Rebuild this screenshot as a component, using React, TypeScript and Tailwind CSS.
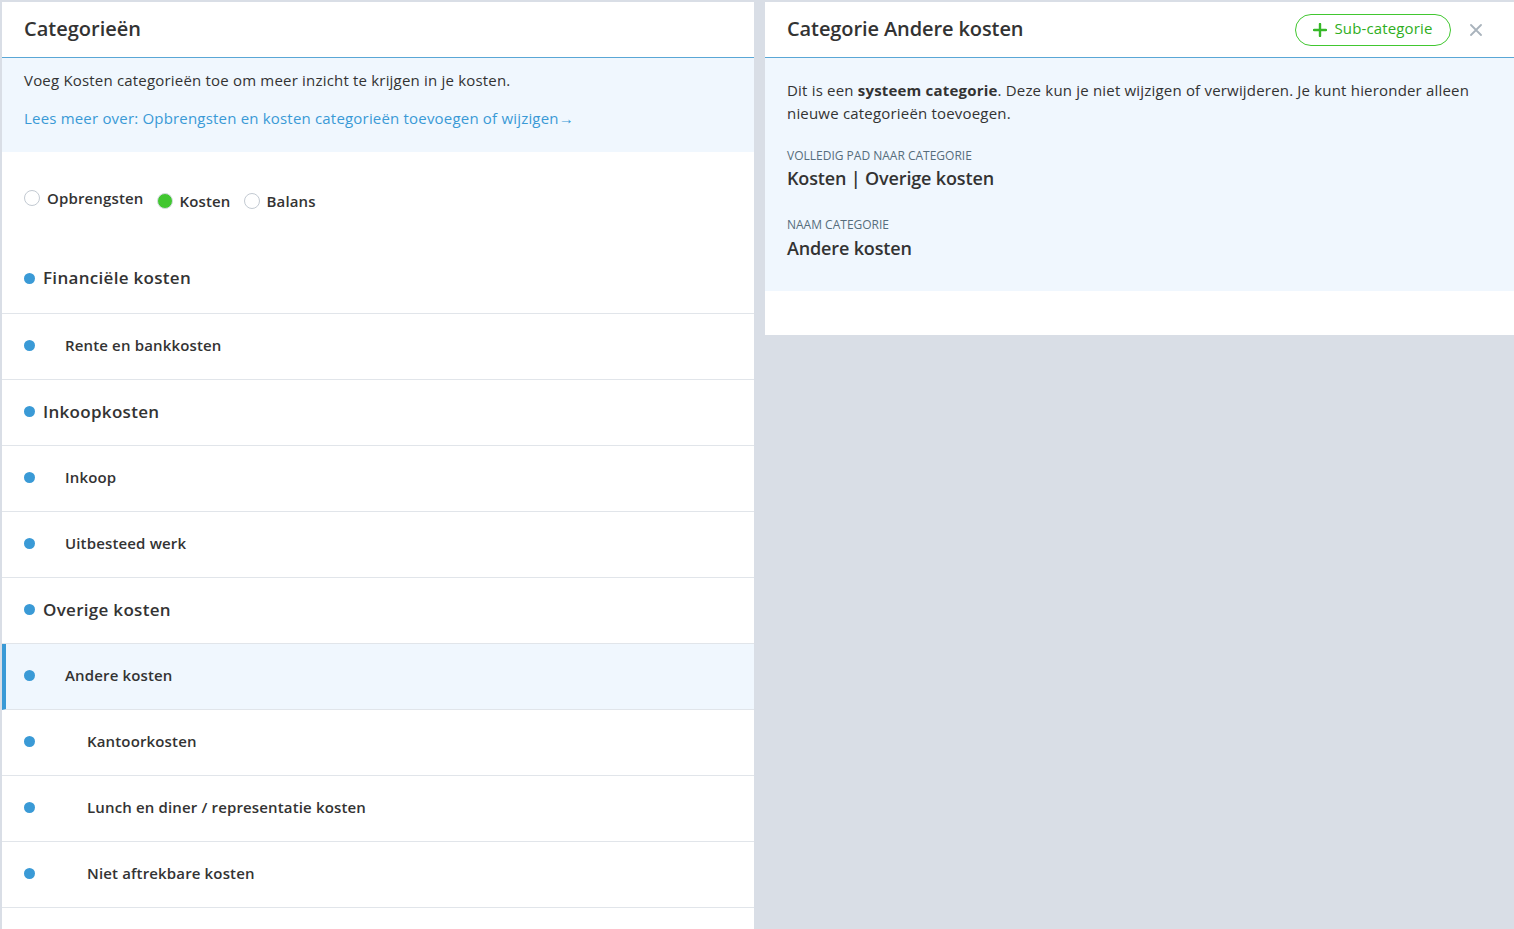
import React from "react";

const rows: { label: string; level: number; selected?: boolean }[] = [
  { label: "Financiële kosten", level: 0 },
  { label: "Rente en bankkosten", level: 1 },
  { label: "Inkoopkosten", level: 0 },
  { label: "Inkoop", level: 1 },
  { label: "Uitbesteed werk", level: 1 },
  { label: "Overige kosten", level: 0 },
  { label: "Andere kosten", level: 1, selected: true },
  { label: "Kantoorkosten", level: 2 },
  { label: "Lunch en diner / representatie kosten", level: 2 },
  { label: "Niet aftrekbare kosten", level: 2 },
];

function Radio({ checked, label, shift }: { checked?: boolean; label: string; shift?: boolean }) {
  return (
    <label className={`flex items-center gap-[7px] ${shift ? "-translate-y-[3px]" : ""}`}>
      {checked ? (
        <span className="w-[16px] h-[16px] rounded-full bg-[#41c730] border border-[#d5dbe1] box-border" />
      ) : (
        <span className="w-[16px] h-[16px] rounded-full bg-white border border-[#c3cad2] box-border" />
      )}
      <span className="text-[15px] font-semibold text-[#333] tracking-[0.15px]">{label}</span>
    </label>
  );
}

export default function App() {
  return (
    <div
      className="w-[1514px] h-[929px] overflow-hidden bg-[#d9dee6] flex items-start gap-[11px] pl-[2px] pt-[2px]"
      style={{ fontFamily: '"Open Sans", "Noto Sans", sans-serif' }}
    >
      {/* Left panel */}
      <div className="w-[752px] h-[927px] bg-white flex flex-col shrink-0">
        <div className="h-[56px] flex items-center px-[22px] pb-[1px] border-b border-[#5aa7d6] shrink-0">
          <h1 className="text-[20px] font-semibold text-[#333]">Categorieën</h1>
        </div>
        <div className="bg-[#f0f7fe] h-[94px] px-[22px] pt-[11px] shrink-0">
          <p className="text-[15px] text-[#333] leading-[23px] tracking-[0.19px]">
            Voeg Kosten categorieën toe om meer inzicht te krijgen in je kosten.
          </p>
          <p className="text-[15px] text-[#3a9ad6] leading-[23px] mt-[15px] tracking-[0.19px]">
            Lees meer over: Opbrengsten en kosten categorieën toevoegen of wijzigen→
          </p>
        </div>
        <div className="h-[95px] flex items-center gap-[13px] px-[22px] pt-[3px] shrink-0">
          <Radio label="Opbrengsten" shift />
          <Radio label="Kosten" checked />
          <Radio label="Balans" />
        </div>
        {rows.map((r, i) => (
          <div
            key={r.label}
            className={`shrink-0 flex items-center border-b border-[#e1e5ea] ${
              i === 0 ? "h-[67px] pb-[4px]" : "h-[66px] pb-[2px]"
            } ${r.selected ? "bg-[#f0f7fe] border-l-[4px] border-l-[#3a9ad6] pl-[18px]" : "pl-[22px]"}`}
          >
            <span className="w-[11px] h-[11px] rounded-full bg-[#3a9ad6] shrink-0" />
            <span
              className={`font-semibold text-[#333] ${
                r.level === 0
                  ? "text-[17px] ml-[8px] tracking-[0.3px]"
                  : r.level === 1
                  ? "text-[15px] ml-[30px] tracking-[0.15px]"
                  : "text-[15px] ml-[52px] tracking-[0.15px]"
              }`}
            >
              {r.label}
            </span>
          </div>
        ))}
      </div>

      {/* Right panel */}
      <div className="w-[749px] bg-white flex flex-col shrink-0">
        <div className="h-[56px] flex items-center px-[22px] border-b border-[#5aa7d6]">
          <h2 className="text-[20px] font-semibold text-[#333] flex-1 tracking-[-0.1px] -mt-[1px]">Categorie Andere kosten</h2>
          <button className="h-[32px] w-[156px] rounded-full border border-[#41c730] text-[#2fae22] flex items-center justify-center gap-[7px] text-[15px] tracking-[0.15px]">
            <svg width="14" height="14" viewBox="0 0 14 14">
              <path d="M7 1v12M1 7h12" stroke="#36b828" strokeWidth="2.4" strokeLinecap="round" />
            </svg>
            <span className="leading-none -mt-[2px]">Sub-categorie</span>
          </button>
          <button className="ml-[19px] mr-[10px] w-[12px] h-[12px] flex items-center justify-center">
            <svg width="12" height="12" viewBox="0 0 12 12">
              <path d="M1 1l10 10M11 1L1 11" stroke="#a9b3bc" strokeWidth="1.8" strokeLinecap="round" />
            </svg>
          </button>
        </div>
        <div className="bg-[#f0f7fe] px-[22px] pt-[21px] pb-[31px]">
          <p className="text-[15px] text-[#333] leading-[23px] tracking-[0.19px]">
            Dit is een <strong className="font-bold">systeem categorie</strong>. Deze kun je niet wijzigen of verwijderen. Je kunt hieronder alleen nieuwe categorieën toevoegen.
          </p>
          <div className="mt-[23px] text-[12px] leading-[16px] text-[#566d7c] uppercase">Volledig pad naar categorie</div>
          <div className="mt-[2px] text-[18px] leading-[24px] font-semibold text-[#333] tracking-[-0.15px]">Kosten | Overige kosten</div>
          <div className="mt-[27px] text-[12px] leading-[16px] text-[#566d7c] uppercase">Naam categorie</div>
          <div className="mt-[3px] text-[18px] leading-[24px] font-semibold text-[#333] tracking-[-0.15px]">Andere kosten</div>
        </div>
        <div className="h-[44px]" />
      </div>
    </div>
  );
}
